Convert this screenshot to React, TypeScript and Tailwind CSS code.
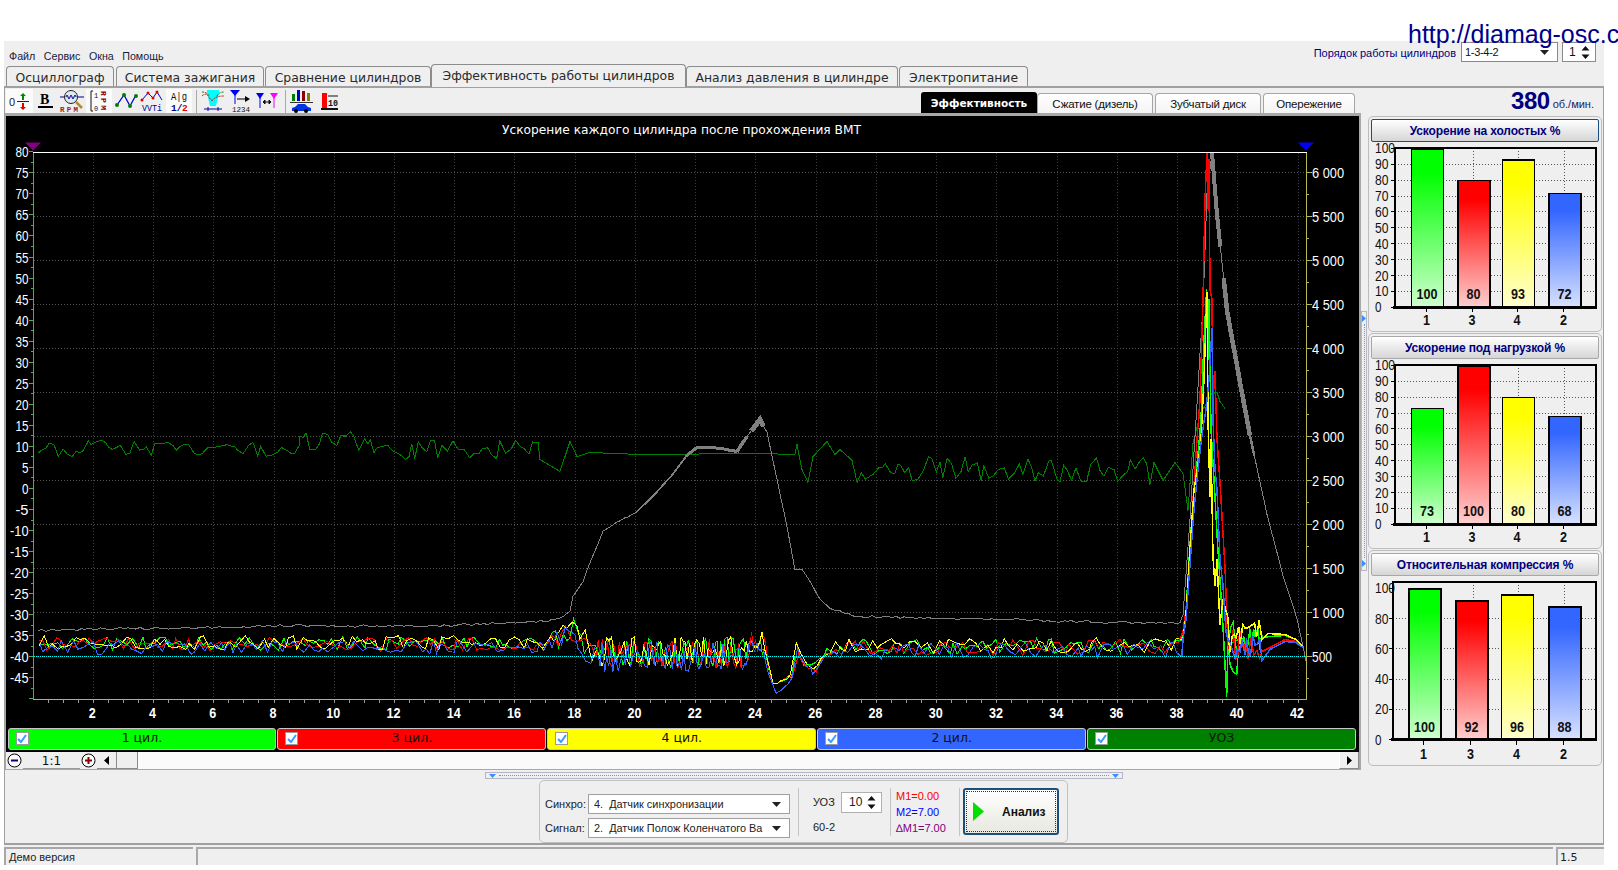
import React from "react";

function rng(seed: number) {
  let a = seed;
  return () => {
    a |= 0; a = (a + 0x6d2b79f5) | 0;
    let t = Math.imul(a ^ (a >>> 15), 1 | a);
    t = (t + Math.imul(t ^ (t >>> 7), 61 | t)) ^ t;
    return ((t ^ (t >>> 14)) >>> 0) / 4294967296;
  };
}
type P = [number, number];
const lerp = (tb: P[], x: number) => {
  if (x <= tb[0][0]) return tb[0][1];
  for (let i = 1; i < tb.length; i++) {
    if (x <= tb[i][0]) {
      const [a, b] = tb[i - 1]; const [c, d] = tb[i];
      return b + ((x - a) / (c - a)) * (d - b);
    }
  }
  return tb[tb.length - 1][1];
};
const str = (p: P[]) => p.map(([x, y]) => `${x.toFixed(1)},${y.toFixed(1)}`).join(" ");

const center: P[] = [[38,644],[540,644],[556,640],[568,628],[574,632],[590,648],[600,653],[745,653],[752,642],[764,642],[770,675],[775,688],[793,675],[796,642],[803,662],[816,668],[826,652],[840,648],[1182,646]];
const amp: P[] = [[38,7],[540,7],[568,14],[600,15],[745,15],[764,14],[768,4],[792,3],[796,3],[803,4],[826,5],[850,8],[1182,8]];

function traceBase(seed: number, off: number): P[] {
  const r = rng(seed); const out: P[] = [];
  let x = 38 + r() * 2;
  while (x < 1182) {
    out.push([x, lerp(center, x) + off + (r() * 2 - 1) * lerp(amp, x)]);
    x += x > 590 && x < 765 ? 1.6 + r() * 1.4 : 2.6 + r() * 4;
  }
  return out;
}
function after(seed: number, c: number, a: number, h: P[]): P[] {
  const r = rng(seed); const out: P[] = [];
  for (let x = 1228; x < 1262; x += 1.5 + r() * 1.5) out.push([x, c + (r() * 2 - 1) * a]);
  for (const p of h) out.push(p);
  return out;
}
const traces: { c: string; p: P[]; s: P[] }[] = [
  { c: "#00ff00", p: traceBase(11, 0), s: [[1183,636],[1186,612],[1190,545],[1194,490],[1198,455],[1201,420],[1204,340],[1206.7,290],[1208,360],[1209,300],[1211,430],[1214,480],[1218,551],[1222.7,622],[1226.7,697],[1228,640],[1230,665],[1233,672],[1236.7,675],[1239,640], ...after(5, 638, 18, [[1262,638],[1270,637],[1285,636],[1296,640],[1303,647]])] },
  { c: "#ff0000", p: traceBase(22, 1), s: [[1183,632],[1186,610],[1190,560],[1193,500],[1197,440],[1200,400],[1203,300],[1205,200],[1207,154],[1208.3,211],[1209,160],[1210,290],[1212,300],[1213,400],[1215,372],[1217,440],[1220,483],[1225,568],[1227,622], ...after(6, 645, 15, [[1262,652],[1270,648],[1285,640],[1296,642],[1303,648]])] },
  { c: "#ffff00", p: traceBase(33, -1), s: [[1183,640],[1186,615],[1190,550],[1194,490],[1198,465],[1201,440],[1204,380],[1207,293],[1208,420],[1210,497],[1211,440],[1213,558],[1215,586],[1217,560],[1220,625],[1223,600], ...after(7, 636, 18, [[1262,640],[1268,634],[1285,635],[1296,640],[1303,647]])] },
  { c: "#3366ff", p: traceBase(44, 4), s: [[1183,640],[1186,620],[1190,565],[1194,510],[1198,470],[1202,435],[1206,410],[1209,380],[1212,329],[1213,420],[1215,470],[1217,490],[1220,560],[1223,586],[1226,633], ...after(8, 650, 15, [[1262,661],[1270,650],[1285,642],[1296,643],[1303,648]])] },
];

const grayBase: P[] = [[38,631],[120,629],[200,628],[300,626],[420,627],[540,622],[560,619],[570,612],[573,597],[583,582],[590,563],[603,532],[616,523],[636,513],[653,497],[670,478],[686,457],[697,448],[713,448],[737,452],[747,437],[760,420],[767,433],[777,480],[787,527],[795,570],[802,570],[810,582],[820,600],[830,609],[840,612],[860,617],[1000,620],[1160,624],[1180,623],[1183,615],[1190,520],[1200,354],[1203,308],[1207,194],[1212,153],[1217,215],[1227,311],[1240,383],[1250,436],[1267,515],[1283,576],[1297,619],[1306,661]];
const gray: P[] = (() => {
  const r = rng(91); const out: P[] = [];
  for (let i = 0; i < grayBase.length - 1; i++) {
    const [a, b] = grayBase[i]; const [c, d] = grayBase[i + 1];
    const n = Math.max(1, Math.round((c - a) / 4));
    for (let k = 0; k < n; k++) {
      const t = k / n; const flat = a < 560 || (a > 830 && a < 1180);
      out.push([a + (c - a) * t, b + (d - b) * t + (flat ? (r() - 0.5) * 2.4 : (r() - 0.5) * 0.8)]);
    }
  }
  out.push([1306, 661]);
  return out;
})();
const grayBands: { a: number; b: number; w: number }[] = [
  { a: 1209, b: 1222, w: 4 },
  { a: 1222, b: 1250, w: 4.5 },
  { a: 1250, b: 1258, w: 2.5 },
  { a: 640, b: 686, w: 1.8 },
  { a: 686, b: 737, w: 3 },
  { a: 737, b: 750, w: 3.5 },
  { a: 750, b: 766, w: 5 },
];
const noisy = (seed: number, x0: number, x1: number, c: number, a: number): P[] => {
  const r = rng(seed); const out: P[] = [];
  for (let x = x0; x < x1; x += 2.6 + r() * 3.4) out.push([x, c + (r() * 2 - 1) * a]);
  return out;
};
const uoz: P[] = [...noisy(71, 38, 300, 449, 9), ...noisy(72, 300, 400, 443, 11), ...noisy(73, 400, 540, 450, 10), [540,460],[560,472],[570,442],[577,457],[590,453],[640,455],[760,454],[795,455],[797,445],[802,470],[808,483],[813,457],[827,442],[835,455],[840,450], ...noisy(74, 852, 1150, 470, 13), [1150,485],[1154,463],[1163,481],[1175,463],[1183,474],[1188,511],[1193,444],[1200,415],[1212,394],[1217,393],[1220,402],[1225,409]];

const xs = (t: number) => 93.3 + (t - 2) * 30.12;
const yRpm = (r: number) => 173.3 + (6000 - r) * 0.08794;
const yL = (v: number) => 152.3 + (80 - v) * 4.208;
const NARROW = "'Liberation Sans Narrow','Liberation Sans',sans-serif";

function MainChart() {
  const leftVals: number[] = []; for (let v = 80; v >= -45; v -= 5) leftVals.push(v);
  const rpm: number[] = []; for (let r = 6000; r >= 500; r -= 500) rpm.push(r);
  const tv: number[] = []; for (let t = 2; t <= 42; t += 2) tv.push(t);
  const minor: number[] = []; for (let t = 0.5; t <= 42; t += 0.5) minor.push(t);
  const lminor: number[] = []; for (let v = 80; v >= -50; v -= 2.5) lminor.push(v);
  const rminor: number[] = []; for (let r = 6000; r >= 250; r -= 250) rminor.push(r);
  return (
    <svg width={1353} height={611} viewBox="6 116.5 1353 611" className="block bg-black">
      <text x={502} y={134} fill="#fff" fontSize={13} fontFamily="'DejaVu Sans',sans-serif" textLength={359} lengthAdjust="spacingAndGlyphs">Ускорение каждого цилиндра после прохождения ВМТ</text>
      {rpm.map((r) => <line key={r} x1={34} x2={1306} y1={yRpm(r)} y2={yRpm(r)} stroke="#555" strokeDasharray="1 2" shapeRendering="crispEdges" />)}
      {tv.map((t) => <line key={t} x1={xs(t)} x2={xs(t)} y1={153} y2={699} stroke="#3c3c3c" strokeDasharray="1 2" shapeRendering="crispEdges" />)}
      <polyline points={str(uoz)} fill="none" stroke="#008000" strokeWidth={1} shapeRendering="crispEdges" />
      <polyline points={str(gray)} fill="none" stroke="#808080" strokeWidth={1} shapeRendering="crispEdges" />
      {grayBands.map((g, i) => <polyline key={i} points={str(gray.filter(([x]) => x >= g.a && x <= g.b))} fill="none" stroke="#808080" strokeWidth={g.w} shapeRendering="crispEdges" />)}
      {traces.map((t) => <polyline key={t.c} points={str(t.p)} fill="none" stroke={t.c} strokeWidth={1} strokeLinejoin="miter" shapeRendering="crispEdges" />)}
      {traces.map((t) => <polyline key={t.c} points={str([t.p[t.p.length - 1], ...t.s])} fill="none" stroke={t.c} strokeWidth={1.5} strokeLinejoin="miter" shapeRendering="crispEdges" />)}
      <line x1={34} x2={1306} y1={656.5} y2={656.5} stroke="#00ffff" strokeDasharray="1 1" shapeRendering="crispEdges" />
      <line x1={33} x2={1307} y1={152.5} y2={152.5} stroke="#fff" shapeRendering="crispEdges" />
      <line x1={33.5} x2={33.5} y1={153} y2={699} stroke="#55aa55" shapeRendering="crispEdges" />
      <line x1={1306.5} x2={1306.5} y1={153} y2={699} stroke="#b8b850" shapeRendering="crispEdges" />
      <line x1={33} x2={1307} y1={699.5} y2={699.5} stroke="#aaaaaa" shapeRendering="crispEdges" />
      {minor.map((t) => <line key={t} x1={xs(t)} x2={xs(t)} y1={700} y2={703} stroke="#999" shapeRendering="crispEdges" />)}
      {lminor.map((v) => <line key={v} x1={v % 5 === 0 ? 29 : 31} x2={33} y1={yL(v)} y2={yL(v)} stroke="#55aa55" shapeRendering="crispEdges" />)}
      {rminor.map((r) => <line key={r} x1={1307} x2={r % 500 === 0 ? 1312 : 1309} y1={yRpm(r)} y2={yRpm(r)} stroke="#b8b850" shapeRendering="crispEdges" />)}
      {leftVals.map((v) => {
        const s = String(v);
        return <text key={v} x={28.5} y={yL(v) + 5.5} textAnchor="end" fill="#fff" fontSize={15} fontFamily={NARROW} textLength={s.length === 1 ? 6.5 : s.length === 2 ? 13 : 18.5} lengthAdjust="spacingAndGlyphs">{s}</text>;
      })}
      {rpm.map((r) => {
        const s = r === 500 ? "500" : `${Math.floor(r / 1000)} ${String(r % 1000).padStart(3, "0")}`;
        return <text key={r} x={1312} y={yRpm(r) + 5.5} fill="#fff" fontSize={15} fontFamily={NARROW} textLength={r === 500 ? 20 : 32} lengthAdjust="spacingAndGlyphs">{s}</text>;
      })}
      {tv.map((t) => <text key={t} x={xs(t) - 1} y={718.5} textAnchor="middle" fill="#fff" fontSize={15} fontWeight={700} fontFamily={NARROW} textLength={t < 10 ? 7 : 14} lengthAdjust="spacingAndGlyphs">{t}</text>)}
      <polygon points="25,143 41,143 33,151" fill="#800080" />
      <polygon points="1298,143 1314,143 1306,151" fill="#0000ff" />
    </svg>
  );
}

const Cb = () => (
  <span className="w-[13px] h-[13px] bg-white border border-[#9a9a9a] flex items-center justify-center shrink-0">
    <svg width="10" height="9" viewBox="0 0 10 9"><path d="M1 5l3 3 5-7" fill="none" stroke="#3b9cff" strokeWidth="2" /></svg>
  </span>
);
function Leg({ label, bg }: { label: string; bg: string }) {
  return (
    <div className={`flex-1 h-[22px] rounded-[3px] border border-[#c8c8c8] flex items-center relative pl-[7px] ${bg}`}>
      <Cb />
      <span className="flex-1 text-center pr-[20px] text-[12.5px] text-[#111] font-['DejaVu_Sans',sans-serif]">{label}</span>
    </div>
  );
}

function RoundIcon({ plus }: { plus?: boolean }) {
  return (
    <svg width="17" height="17" viewBox="0 0 17 17">
      <circle cx="8.5" cy="8.5" r="6.5" fill="#fff" stroke="#000" />
      <rect x="5" y="7.5" width="7" height="2" fill={plus ? "#8b0000" : "#000080"} />
      {plus && <rect x="7.5" y="5" width="2" height="7" fill="#8b0000" />}
    </svg>
  );
}

function Bars({ ticks, top, bottom, boxL, vals, grid, bars, lx, vy, ly, full }: { ticks: number[]; top: number; bottom: number; boxL: number; vals: number[]; grid: number[]; bars: number[]; lx: number[]; vy: number; ly: number; full: number }) {
  const labels = ["1", "3", "4", "2"];
  const y = (v: number) => bottom - (v / 100) * (bottom - full);
  const cols = ["g", "r", "y", "b"];
  const stops = [["#00ff00", "#d0ffd0"], ["#ff0000", "#ffd0d0"], ["#ffff00", "#ffffd0"], ["#3366ff", "#d8e2ff"]];
  const boxR = 227;
  const key = `k${Math.round(full)}${vals[0]}${vals[1]}`;
  return (
    <svg width={232} height={187} viewBox="0 0 232 187" className="block -mx-[2px]">
      <defs>
        {cols.map((c, i) => (
          <linearGradient key={c} id={key + c} x1="0" y1="0" x2="0" y2="1">
            <stop offset="0" stopColor={stops[i][0]} />
            <stop offset="0.15" stopColor={stops[i][0]} />
            <stop offset="1" stopColor={stops[i][1]} />
          </linearGradient>
        ))}
      </defs>
      {ticks.filter((t) => t > 0 && t < 100).map((t) => <line key={t} x1={boxL} x2={boxR} y1={y(t)} y2={y(t)} stroke="#555" strokeDasharray="1 2" shapeRendering="crispEdges" />)}
      {grid.map((g) => <line key={g} x1={g} x2={g} y1={top} y2={bottom} stroke="#555" strokeDasharray="1 2" shapeRendering="crispEdges" />)}
      {bars.map((x, i) => (
        <rect key={i} x={x + 0.5} y={y(vals[i]) + 0.5} width={32} height={bottom - y(vals[i])} fill={`url(#${key + cols[i]})`} stroke="#000" strokeWidth={1.4} shapeRendering="crispEdges" />
      ))}
      <rect x={boxL} y={top} width={boxR - boxL} height={bottom - top} fill="none" stroke="#000" strokeWidth={2} shapeRendering="crispEdges" />
      <line x1={boxL - 2} x2={boxR + 1} y1={bottom} y2={bottom} stroke="#000" strokeWidth={3} shapeRendering="crispEdges" />
      {ticks.map((t) => <g key={t}>
        <line x1={boxL - 4} x2={boxL} y1={y(t)} y2={y(t)} stroke="#000" shapeRendering="crispEdges" />
        <text x={6} y={y(t) + 5} fontSize={14} fill="#111" fontFamily={NARROW} textLength={t === 100 ? 20 : t === 0 ? 6.5 : 13.5} lengthAdjust="spacingAndGlyphs">{t}</text>
      </g>)}
      {bars.map((x, i) => <text key={i} x={x + 16} y={vy} textAnchor="middle" fontSize={14} fontWeight={700} fill="#111" fontFamily={NARROW} textLength={vals[i] === 100 ? 21 : 14} lengthAdjust="spacingAndGlyphs">{vals[i]}</text>)}
      {lx.map((x, i) => <g key={i}>
        <line x1={x} x2={x} y1={bottom} y2={bottom + 5} stroke="#000" shapeRendering="crispEdges" />
        <text x={x} y={ly} textAnchor="middle" fontSize={15} fontWeight={700} fill="#111" fontFamily={NARROW} textLength={7} lengthAdjust="spacingAndGlyphs">{labels[i]}</text>
      </g>)}
    </svg>
  );
}

function Panel({ title, focus, children }: { title: string; focus?: boolean; children: React.ReactNode }) {
  return (
    <div className="h-[216px] border border-[#bdbdbd] rounded-[5px] px-[2px] pt-[2px]">
      <div className={`h-[23px] mx-0 rounded-[2px] border bg-gradient-to-b from-white to-[#d6d6d6] flex items-center justify-center ${focus ? "border-[#1d4f7c]" : "border-[#a8a8a8]"}`}>
        <span className="text-[12px] font-bold text-[#00007f] font-['Liberation_Sans',sans-serif] tracking-[-0.15px]">{title}</span>
      </div>
      {children}
    </div>
  );
}

const ic = "w-[26.6px] h-[24px] flex items-center justify-center shrink-0";
const on = "bg-[#fbfbfb]";
function Toolbar() {
  const t = { fontFamily: "'Liberation Sans',sans-serif" };
  const mono = { fontFamily: "'Liberation Mono',monospace" };
  return (
    <div className="flex items-end w-[915px] h-[25px]">
      <div className={`${ic} ${on}`}>
        <svg width="24" height="22" viewBox="0 0 24 22"><text x="2" y="16" fontSize="11" style={t} fill="#222">0</text><line x1="10" x2="22" y1="11.5" y2="11.5" stroke="#222" /><path d="M16 3l3 3h-2v4h-2V6h-2z" fill="#008a00" /><path d="M16 20l3-3h-2v-4h-2v4h-2z" fill="#e00000" /></svg>
      </div>
      <div className={ic}>
        <svg width="22" height="22" viewBox="0 0 22 22"><text x="5" y="14" fontSize="14" fontWeight="700" fontFamily="'Liberation Serif',serif" fill="#000">B</text><rect x="3" y="16" width="15" height="2" fill="#000" /></svg>
      </div>
      <div className={ic}>
        <svg width="26" height="24" viewBox="0 0 26 24"><line x1="1" x2="25" y1="8" y2="8" stroke="#000080" /><circle cx="12" cy="8" r="6.5" fill="#dfe8f5" stroke="#222" /><path d="M7 8q1-4 2 0t2 0 2 0 2 0 2 0" fill="none" stroke="#000080" /><line x1="17" y1="13" x2="23" y2="19" stroke="#b58b2a" strokeWidth="2.5" /><text x="1" y="23" fontSize="7.5" fontWeight="700" style={mono} fill="#a02020" textLength="18">RPM</text></svg>
      </div>
      <div className={`${ic} ${on}`}>
        <svg width="22" height="24" viewBox="0 0 22 24"><path d="M5 2H3v20h2" fill="none" stroke="#111" /><text x="6" y="9" fontSize="7" style={mono} fill="#111">1</text><text x="6" y="22" fontSize="7" style={mono} fill="#111">0</text><text x="0" y="0" transform="translate(13 2) rotate(90)" fontSize="8" fontWeight="700" style={mono} fill="#8b0000" textLength="19">RPM</text></svg>
      </div>
      <div className={ic}>
        <svg width="24" height="22" viewBox="0 0 24 22"><path d="M3 15L10 5l6 11 6-11" fill="none" stroke="#0000dd" strokeWidth="1.3" /><circle cx="3" cy="15" r="2" fill="#008000" /><circle cx="10" cy="5" r="2" fill="#008000" /><circle cx="16" cy="16" r="2" fill="#008000" /><circle cx="22" cy="6" r="2" fill="#008000" /></svg>
      </div>
      <div className={ic}>
        <svg width="24" height="24" viewBox="0 0 24 24"><path d="M2 11L8 4l5 5 4-6 5 8" fill="none" stroke="#0000dd" /><circle cx="8" cy="4" r="1.5" fill="#e00000" /><circle cx="13" cy="9" r="1.5" fill="#e00000" /><circle cx="17" cy="3" r="1.5" fill="#e00000" /><circle cx="2" cy="11" r="1.5" fill="#e00000" /><text x="2" y="22" fontSize="9" style={mono} fill="#000099" textLength="20" lengthAdjust="spacingAndGlyphs">VVTi</text></svg>
      </div>
      <div className={`${ic} ${on}`}>
        <svg width="22" height="24" viewBox="0 0 22 24"><text x="3" y="11" fontSize="10" style={mono} fill="#111" textLength="16" lengthAdjust="spacingAndGlyphs">A|g</text><text x="3" y="22" fontSize="9.5" fontWeight="700" style={mono} fill="#000080">1/</text><text x="14" y="22" fontSize="9.5" fontWeight="700" style={mono} fill="#e00000">2</text></svg>
      </div>
      <div className="w-[1px] h-[23px] bg-[#a8a8a8] ml-[4px] mr-[3px]" />
      <div className={ic}>
        <svg width="24" height="24" viewBox="0 0 24 24"><path d="M6 1h12v3l-3 13H9L6 4z" fill="#00ffff" /><path d="M1 7q4-4 7 1t4 3 4-3 7-1" fill="none" stroke="#d00000" strokeDasharray="2 1" /><path d="M1 3q5 0 7 4M16 7q2-4 7-4" fill="none" stroke="#008000" strokeDasharray="2 1" /><path d="M3 20h18M7 18v4M17 18v4" stroke="#0000aa" fill="none" /></svg>
      </div>
      <div className={ic}>
        <svg width="24" height="24" viewBox="0 0 24 24"><path d="M2 1h10l-5 6z" fill="#0000ee" /><line x1="7" x2="7" y1="6" y2="15" stroke="#0000ee" /><path d="M9 10h11" stroke="#000" /><path d="M17 7l5 3-5 3z" fill="#000" /><text x="4" y="23" fontSize="8" style={mono} fill="#111" textLength="18" lengthAdjust="spacingAndGlyphs">1234</text></svg>
      </div>
      <div className={ic}>
        <svg width="24" height="22" viewBox="0 0 24 22"><path d="M1 3h8l-4 6z" fill="#0000ee" /><line x1="5" x2="5" y1="8" y2="18" stroke="#0000ee" /><path d="M15 3h8l-4 6z" fill="#ff00ff" /><line x1="19" x2="19" y1="8" y2="18" stroke="#ff00ff" /><path d="M8 12h8M8 12l2-2v4zM16 12l-2-2v4z" stroke="#111" fill="#111" /></svg>
      </div>
      <div className="w-[1px] h-[23px] bg-[#a8a8a8] ml-[5px] mr-[3px]" />
      <div className={ic}>
        <svg width="24" height="24" viewBox="0 0 24 24"><rect x="2" y="5" width="3" height="7" fill="#008000" /><rect x="7" y="1" width="3" height="11" fill="#0000cc" /><rect x="12" y="2" width="3" height="10" fill="#8b0000" /><rect x="17" y="4" width="3" height="8" fill="#808000" /><line x1="0" x2="23" y1="13.5" y2="13.5" stroke="#333" /><path d="M2 22v-3l3-1 3-3h7l3 3 3 1v3z" fill="#0033dd" /><circle cx="6" cy="22" r="2" fill="#000" /><circle cx="16" cy="22" r="2" fill="#000" /></svg>
      </div>
      <div className={`${ic} ml-[1px]`}>
        <svg width="18" height="20" viewBox="0 0 18 20"><rect x="1" y="2" width="5" height="15" fill="#ff0000" /><line x1="7" x2="17" y1="5" y2="5" stroke="#111" /><text x="7" y="15" fontSize="9" fontWeight="700" style={mono} fill="#111" textLength="10" lengthAdjust="spacingAndGlyphs">10</text><rect x="0" y="17" width="17" height="2" fill="#111" /></svg>
      </div>
    </div>
  );
}

const Down = () => <svg width="11" height="7" viewBox="0 0 11 7" className="shrink-0"><path d="M1 1h9L5.5 6z" fill="#222" /></svg>;
const Spin = () => (
  <svg width="9" height="15" viewBox="0 0 9 15" className="shrink-0"><path d="M0.5 5.5L4.5 1l4 4.5zM0.5 9.5L4.5 14l4-4.5z" fill="#111" /></svg>
);

function Sub({ label, w }: { label: string; w: string }) {
  return (
    <div className={`${w} h-[20px] pt-[2px] border border-b-0 border-[#a5a5a5] rounded-t-[4px] flex items-center justify-center text-[11.5px] tracking-[-0.2px] text-[#111] bg-gradient-to-b from-white to-[#f4f4f4]`}>{label}</div>
  );
}

const dots = "flex-1 border-l border-dotted border-[#4aa0ff] self-center";

export default function App() {
  const p1Ticks = [100,90,80,70,60,50,40,30,20,10,0];
  const p3Ticks = [100,80,60,40,20,0];
  const g1 = [104, 149.5, 195];
  return (
    <div className="relative w-[1618px] h-[870px] overflow-hidden bg-white font-['Liberation_Sans',sans-serif]">
      <div className="absolute left-[1408px] top-[19px] text-[25px] leading-[30px] whitespace-nowrap text-[#00008b] z-20">http://diamag-osc.com</div>
      <div className="h-[41px]" />
      <div className="ml-[4px] w-[1600px] h-[824px] bg-[#efefef] flex flex-col">
        <div className="h-[24px] flex justify-between relative">
          <div className="flex gap-[8.5px] pl-[5px] pt-[8px] text-[10.7px] leading-[14px] text-[#1a1a40]">
            <span>Файл</span><span>Сервис</span><span>Окна</span><span>Помощь</span>
          </div>
          <div className="flex items-start pt-[1px] pr-[8px]">
            <span className="text-[11px] leading-[22px] text-[#00007f] mr-[5px]">Порядок работы цилиндров</span>
            <div className="w-[97px] h-[20px] bg-white border border-[#8a8a8a] flex items-center justify-between pl-[3px] pr-[7px] text-[11px] tracking-[-0.3px] text-[#111]">1-3-4-2<Down /></div>
            <div className="w-[34px] h-[20px] ml-[4px] bg-white border border-[#8a8a8a] flex items-center justify-between pl-[6px] pr-[5px] text-[12px] text-[#111]">1<Spin /></div>
          </div>
        </div>
        <div className="h-[22px] flex items-end pl-[2px] text-[12.4px] text-[#2a2a2a] font-['DejaVu_Sans',sans-serif]">
          <div className="w-[108px] h-[20px] pt-[3px] border border-b-0 border-[#8c8c8c] rounded-t-[4px] flex items-center justify-center">Осциллограф</div>
          <div className="w-[148px] h-[20px] ml-[2px] pt-[3px] border border-b-0 border-[#8c8c8c] rounded-t-[4px] flex items-center justify-center">Система зажигания</div>
          <div className="w-[166px] h-[20px] ml-[1px] pt-[3px] border border-b-0 border-[#8c8c8c] rounded-t-[4px] flex items-center justify-center">Сравнение цилиндров</div>
          <div className="w-[255px] h-[23px] -mb-[1px] relative z-10 bg-[#efefef] border border-b-0 border-[#8c8c8c] rounded-t-[4px] flex items-center justify-center pt-[1px]">Эффективность работы цилиндров</div>
          <div className="w-[212px] h-[20px] pt-[3px] border border-b-0 border-[#8c8c8c] rounded-t-[4px] flex items-center justify-center">Анализ давления в цилиндре</div>
          <div className="w-[129px] h-[20px] ml-[1px] pt-[3px] border border-b-0 border-[#8c8c8c] rounded-t-[4px] flex items-center justify-center">Электропитание</div>
        </div>
        <div className="h-[760px] border-t-2 border-x border-b-2 border-[#a0a0a0] flex flex-col">
          <div className="h-[25px] flex items-end pl-[1px] shrink-0">
            <Toolbar />
            <div className="w-[116px] h-[21px] pt-[2px] bg-black rounded-t-[3px] text-white text-[10.5px] font-bold flex items-center justify-center font-['DejaVu_Sans',sans-serif]">Эффективность</div>
            <Sub label="Сжатие (дизель)" w="w-[116px]" />
            <Sub label="Зубчатый диск" w="w-[106px] ml-[2px]" />
            <Sub label="Опережение" w="w-[92px] ml-[2px]" />
            <div className="ml-auto mr-[9px] flex items-end text-[#00007f] h-[25px] pt-[1px]">
              <span className="text-[24px] leading-[25px] font-bold tracking-[-0.5px]">380</span>
              <span className="text-[11px] leading-[18px] ml-[3px] text-[#222266]">об./мин.</span>
            </div>
          </div>
          <div className="h-[657px] flex shrink-0">
            <div className="w-[1356px] border-t-[3px] border-l border-r-2 border-b border-[#a8a8a8] flex flex-col shrink-0">
              <MainChart />
              <div className="h-[25px] bg-black flex gap-[1px] pl-[1.5px] pr-[3px] pt-[0.5px]">
                <Leg label="1 цил." bg="bg-[#00ff00]" />
                <Leg label="3 цил." bg="bg-[#ff0000]" />
                <Leg label="4 цил." bg="bg-[#ffff00]" />
                <Leg label="2 цил." bg="bg-[#3366ff]" />
                <Leg label="УОЗ" bg="bg-[#008000]" />
              </div>
              <div className="h-[17px] flex items-stretch bg-[#fafafa]">
                <div className="w-[17px] bg-[#efefef] flex items-center justify-center"><RoundIcon /></div>
                <div className="w-[57px] bg-[#efefef] border-b border-[#9a9a9a] text-center text-[12px] leading-[18px] text-[#111] font-['DejaVu_Sans',sans-serif]">1:1</div>
                <div className="w-[17px] bg-[#efefef] flex items-center justify-center"><RoundIcon plus /></div>
                <div className="w-[20px] bg-[#efefef] border-r border-b border-[#8a8a8a] flex items-center justify-center"><svg width="5" height="9" viewBox="0 0 5 9"><path d="M5 0v9L0 4.5z" fill="#000" /></svg></div>
                <div className="w-[21px] bg-[#efefef] border-r border-b border-[#8a8a8a]" />
                <div className="flex-1" />
                <div className="w-[20px] bg-[#efefef] border-r border-b border-[#8a8a8a] border-l border-l-white flex items-center justify-center"><svg width="5" height="9" viewBox="0 0 5 9"><path d="M0 0v9l5-4.5z" fill="#000" /></svg></div>
              </div>
            </div>
            <div className="w-[6px] h-[260px] mt-[198px] border border-[#b5b5c8] flex flex-col items-center py-[3px] gap-[2px] shrink-0">
              <svg width="4" height="7" viewBox="0 0 4 7"><path d="M0 0v7l4-3.5z" fill="#3a8dff" /></svg>
              <div className={dots} />
              <svg width="4" height="7" viewBox="0 0 4 7"><path d="M0 0v7l4-3.5z" fill="#3a8dff" /></svg>
            </div>
            <div className="ml-[1px] w-[234px] pt-[3px] flex flex-col gap-[1px]">
              <Panel title="Ускорение на холостых %" focus>
                <Bars ticks={p1Ticks} top={6.3} bottom={165.3} full={6.3} boxL={26} vals={[100,80,93,72]} grid={g1} bars={[42,88.5,133,179.5]} lx={[57.5,103,148,194.5]} vy={157} ly={183} />
              </Panel>
              <Panel title="Ускорение под нагрузкой %">
                <Bars ticks={p1Ticks} top={6.3} bottom={165.3} full={6.3} boxL={26} vals={[73,100,80,68]} grid={g1} bars={[42,88.5,133,179.5]} lx={[57.5,103,148,194.5]} vy={157} ly={183} />
              </Panel>
              <Panel title="Относительная компрессия %">
                <Bars ticks={p3Ticks} top={6.3} bottom={163.5} full={12.3} boxL={23.5} vals={[100,92,96,88]} grid={g1} bars={[39.5,86.5,132,179.5]} lx={[54.5,101.5,147.5,194.5]} vy={156} ly={183} />
              </Panel>
            </div>
          </div>
          <div className="w-[638px] h-[7px] ml-[480px] mt-[2px] border border-[#b5b5c8] flex items-center px-[3px] gap-[3px] shrink-0">
            <svg width="7" height="4" viewBox="0 0 7 4"><path d="M0 0h7L3.5 4z" fill="#3a8dff" /></svg>
            <div className="flex-1 border-t border-dotted border-[#4aa0ff]" />
            <svg width="7" height="4" viewBox="0 0 7 4"><path d="M0 0h7L3.5 4z" fill="#3a8dff" /></svg>
          </div>
          <div className="w-[529px] h-[63px] ml-[534px] mt-[1px] border border-[#c0c0c0] rounded-[5px] flex items-center shrink-0 text-[11px] text-[#222]">
            <div className="w-[258px] pl-[5px] flex flex-col gap-[4px] self-start pt-[13px]">
              <div className="flex items-center h-[20px]">
                <span className="w-[43px]">Синхро:</span>
                <div className="w-[202px] h-[20px] bg-white border border-[#a0a0a0] flex items-center justify-between pl-[5px] pr-[7px] text-[10.9px] whitespace-pre"><span>4.  Датчик синхронизации</span><Down /></div>
              </div>
              <div className="flex items-center h-[20px]">
                <span className="w-[43px]">Сигнал:</span>
                <div className="w-[202px] h-[20px] bg-white border border-[#a0a0a0] flex items-center justify-between pl-[5px] pr-[7px] text-[10.9px] whitespace-pre"><span>2.  Датчик Полож Коленчатого Ва</span><Down /></div>
              </div>
            </div>
            <div className="w-[1px] h-[48px] bg-[#c4c4c4]" />
            <div className="w-[91px] pl-[14px] flex flex-col self-stretch pt-[10px]">
              <div className="flex items-center h-[22px]">
                <span className="w-[28px]">УОЗ</span>
                <div className="w-[41px] h-[21px] bg-white border border-[#b0b0b0] flex items-center justify-between pl-[7px] pr-[5px] text-[12px]">10<Spin /></div>
              </div>
              <div className="mt-[7px] leading-[14px]">60-2</div>
            </div>
            <div className="w-[1px] h-[48px] bg-[#c4c4c4]" />
            <div className="w-[68px] pl-[5px] flex flex-col text-[11px] leading-[16px]">
              <span className="text-[#ff0000]">M1=0.00</span>
              <span className="text-[#0000ff]">M2=7.00</span>
              <span className="text-[#800080]">∆M1=7.00</span>
            </div>
            <div className="w-[1px] h-[48px] bg-[#c4c4c4]" />
            <div className="ml-[3px] w-[96px] h-[47px] rounded-[3px] border-2 border-[#1d4f7c] bg-gradient-to-b from-white to-[#e8e8e0] flex items-center pl-[8px] relative">
              <div className="absolute inset-[1px] border border-dotted border-[#333]" />
              <svg width="11" height="19" viewBox="0 0 11 19" className="shrink-0"><path d="M0 0l11 9.5L0 19z" fill="#00e000" /></svg>
              <span className="ml-[18px] text-[12px] font-bold text-[#111]">Анализ</span>
            </div>
          </div>
        </div>
        <div className="h-[18px] mt-[2px] flex text-[11px] leading-[17px] text-[#222] gap-[3px]">
          <div className="w-[189px] border-t-2 border-l-2 border-[#a8a8a8] pl-[3px] shrink-0">Демо версия</div>
          <div className="flex-1 border-t-2 border-l-2 border-[#a8a8a8]" />
          <div className="w-[48px] border-t-2 border-l-2 border-[#a8a8a8] pl-[2px] shrink-0 font-['DejaVu_Sans',sans-serif]">1.5</div>
        </div>
      </div>
    </div>
  );
}
